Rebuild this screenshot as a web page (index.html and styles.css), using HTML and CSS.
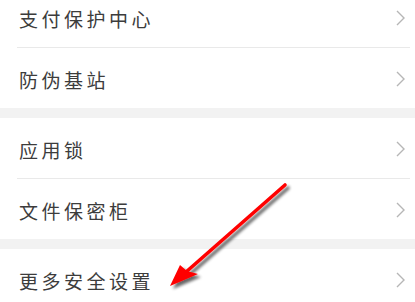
FILE: index.html
```html
<!DOCTYPE html>
<html lang="zh">
<head>
<meta charset="utf-8">
<link rel="stylesheet" href="styles.css">
</head>
<body>
<div class="page">
  <div class="group">
    <div class="row"><span class="label">支付保护中心</span><svg class="chev" width="9" height="16" viewBox="0 0 9 16"><polyline points="1,1 8,8 1,15"/></svg></div>
    <div class="row"><span class="label">防伪基站</span><svg class="chev" width="9" height="16" viewBox="0 0 9 16"><polyline points="1,1 8,8 1,15"/></svg></div>
  </div>
  <div class="group">
    <div class="row"><span class="label">应用锁</span><svg class="chev" width="9" height="16" viewBox="0 0 9 16"><polyline points="1,1 8,8 1,15"/></svg></div>
    <div class="row"><span class="label">文件保密柜</span><svg class="chev" width="9" height="16" viewBox="0 0 9 16"><polyline points="1,1 8,8 1,15"/></svg></div>
  </div>
  <div class="group">
    <div class="row"><span class="label">更多安全设置</span><svg class="chev" width="9" height="16" viewBox="0 0 9 16"><polyline points="1,1 8,8 1,15"/></svg></div>
  </div>
  <svg class="arrow" width="415" height="302" viewBox="0 0 415 302">
    <defs>
      <filter id="sh" x="-20%" y="-20%" width="140%" height="140%">
        <feGaussianBlur in="SourceAlpha" stdDeviation="1.8"/>
        <feOffset dx="3" dy="3" result="b"/>
        <feComponentTransfer><feFuncA type="linear" slope="0.6"/></feComponentTransfer>
        <feMerge><feMergeNode/><feMergeNode in="SourceGraphic"/></feMerge>
      </filter>
    </defs>
    <g filter="url(#sh)">
      <line x1="285" y1="185" x2="186" y2="272" stroke="#ff0000" stroke-width="3.6" stroke-linecap="round"/>
      <polygon points="170,286 180,265 187,271 198,274" fill="#ff0000"/>
    </g>
  </svg>
</div>
</body>
</html>
```

FILE: styles.css
```css
html, body {
  margin: 0;
  padding: 0;
  background: #f2f2f2;
  overflow: hidden;
}
.page {
  position: relative;
  width: 415px;
  height: 302px;
  overflow: hidden;
}
.group {
  background: #ffffff;
  margin-bottom: 10px;
}
.group:first-child {
  margin-top: -13px;
}
.row {
  height: 60px;
  margin-left: 17px;
  margin-right: 5px;
  padding-left: 2px;
  padding-right: 5px;
  display: flex;
  align-items: center;
  justify-content: space-between;
  box-sizing: border-box;
  border-bottom: 1px solid #e9e9e9;
}
.row:last-child {
  border-bottom: none;
}
.group .row:first-child:not(:last-child) {
  height: 61px;
}
.label {
  font-family: "Noto Sans CJK SC", "Noto Sans", sans-serif;
  font-size: 19px;
  letter-spacing: 3.5px;
  color: #3c3c3c;
  font-weight: 400;
  padding-top: 2px;
}
.chev {
  display: block;
  margin-top: 2px;
}
.chev polyline {
  fill: none;
  stroke: #b6b6b6;
  stroke-width: 1.4;
}
.arrow {
  position: absolute;
  left: 0;
  top: 0;
  pointer-events: none;
}
```
